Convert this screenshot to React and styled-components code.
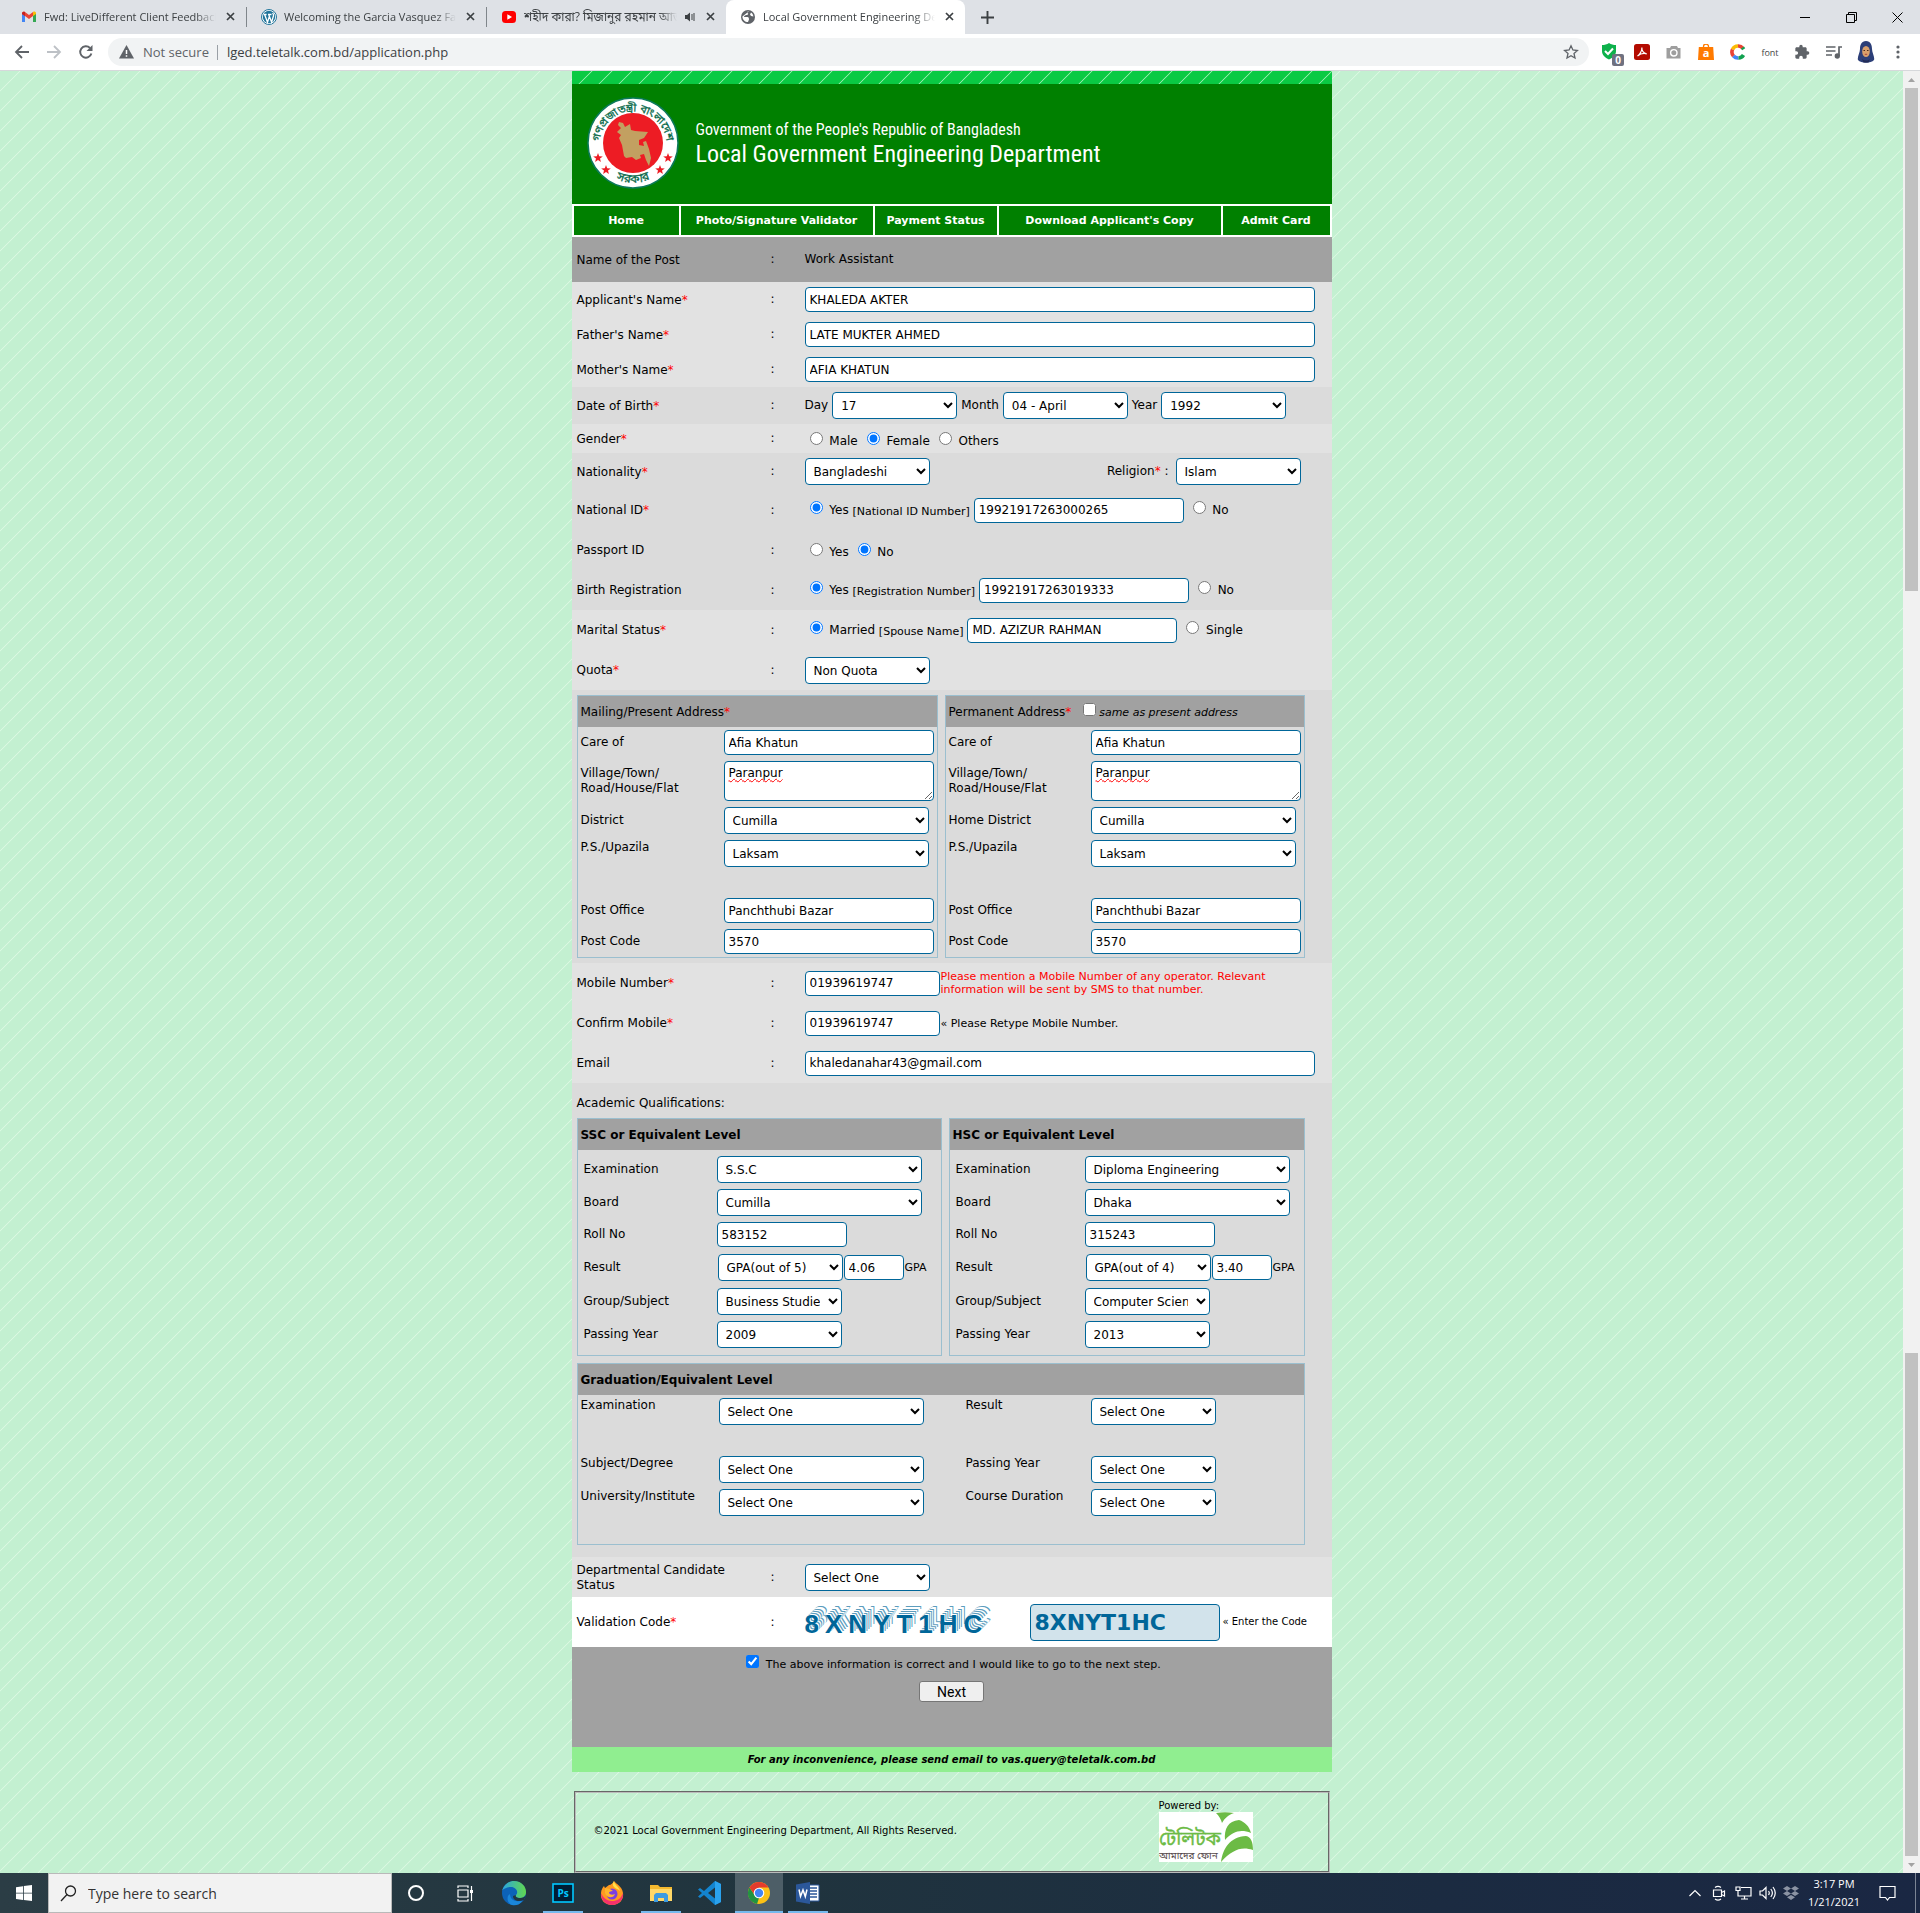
import React from 'react';
import styled, { createGlobalStyle, css } from 'styled-components';

const BLUE = '#006699';
const FORM_FONT = '"DejaVu Sans", Verdana, sans-serif';
const UI_FONT = '"Open Sans", "Noto Sans Bengali", sans-serif';

const GlobalStyle = createGlobalStyle`
  *, *::before, *::after { box-sizing: border-box; }
  body { margin: 0; font-family: ${FORM_FONT}; font-size: 12px; line-height: 15px; color: #000; }
  button, input, select, textarea { font-family: inherit; }
`;

const stripes = (color) => css`
  background-image: linear-gradient(135deg, transparent 47%, ${color} 50%, transparent 53%),
    linear-gradient(135deg, ${color} 0%, transparent 3%, transparent 97%, ${color} 100%);
  background-size: 20px 20px;
`;

/* ---------- browser frame ---------- */

const Screen = styled.div`
  display: flex;
  flex-direction: column;
  min-height: 100vh;
`;

const TabStrip = styled.div`
  display: flex;
  height: 34px;
  padding-left: 7px;
  background: #dee1e6;
  font-family: ${UI_FONT};
`;

const Tab = styled.div`
  display: flex;
  align-items: center;
  gap: 7px;
  width: 239px;
  padding: 7px 9px 8px 14px;
  font-size: 12px;
  color: #3c4043;
  border-radius: 8px 8px 0 0;
  background: ${(p) => (p.$active ? '#fff' : 'transparent')};
  svg { flex: none; }
`;

const TabTitle = styled.span`
  flex: 1;
  min-width: 0;
  overflow: hidden;
  white-space: nowrap;
  font-size: ${(p) => p.$size || 11}px;
  line-height: 19px;
  mask-image: linear-gradient(90deg, #000 88%, transparent);
`;

const TabRule = styled.span`
  align-self: center;
  width: 1px;
  height: 20px;
  background: #80868b;
`;

const PlainButton = styled.button`
  display: inline-flex;
  align-items: center;
  justify-content: center;
  width: ${(p) => p.$w || 32}px;
  height: 100%;
  padding: 0;
  border: 0;
  background: none;
  color: #5f6368;
`;

const Spacer = styled.span`
  flex: 1;
`;

const Toolbar = styled.div`
  display: flex;
  align-items: center;
  height: 37px;
  padding: 0 6px;
  background: #fff;
  border-bottom: 1px solid #d6d8db;
  font-family: ${UI_FONT};
`;

const AddressBar = styled.div`
  display: flex;
  align-items: center;
  flex: 1;
  height: 28px;
  margin: 0 5px 0 6px;
  padding: 0 2px 0 11px;
  border-radius: 14px;
  background: #f1f3f4;
  font-size: 13px;
  color: #5f6368;
`;

const Security = styled.span`
  margin-left: 9px;
  padding-right: 8px;
  border-right: 1px solid #9aa0a6;
`;

const Url = styled.input`
  flex: 1;
  margin-left: 9px;
  padding: 0;
  border: 0;
  background: none;
  font-size: 13px;
  color: #3c4043;
`;

const FontBadge = styled.span`
  font-size: 9px;
  color: #444;
`;

const Viewport = styled.div`
  display: flex;
  flex: 1;
`;

const Page = styled.main`
  flex: 1;
  background-color: #c3f0d1;
  ${stripes('#daf8e1')}
`;

const ScrollTrack = styled.div`
  display: grid;
  grid-template-rows: 17px 503fr 762fr 503fr 17px;
  justify-items: center;
  align-items: center;
  width: 17px;
  background: #f1f1f1;
`;

const Thumb = styled.div`
  width: 13px;
  height: 100%;
  background: #c1c1c1;
`;

/* ---------- site shell ---------- */

const Site = styled.div`
  max-width: 760px;
  margin: 0 auto;
`;

const TopStrip = styled.div`
  height: 13px;
  background-color: #0aca43;
  ${stripes('#8eeaa5')}
`;

const Banner = styled.header`
  display: flex;
  align-items: center;
  gap: 17px;
  height: 120px;
  padding-left: 15px;
  background: #008000;
  color: #fff;
`;

const BannerTitles = styled.div`
  font-family: "Roboto Condensed", "Liberation Sans Narrow", Roboto, sans-serif;
`;

const Country = styled.p`
  margin: 0;
  font-size: 16px;
  line-height: 20px;
`;

const Department = styled.h1`
  margin: 0;
  font-size: 24px;
  font-weight: 400;
  line-height: 28px;
`;

const Nav = styled.nav`
  display: grid;
  grid-template-columns: 105fr 192fr 122fr 222fr 107fr;
  gap: 2px;
  padding: 2px;
  background: #fff;
`;

const NavLink = styled.a`
  padding-top: 1px;
  background: #008000;
  color: #fff;
  font-size: 11px;
  font-weight: bold;
  line-height: 28px;
  text-align: center;
  text-decoration: none;
  white-space: nowrap;
`;

/* ---------- form ---------- */

const TONES = { light: '#e2e2e2', dark: '#dbdbdb', gray: '#a1a1a1', white: '#fff' };

const Row = styled.div`
  display: grid;
  grid-template-columns: 194px 34px 1fr;
  align-items: center;
  min-height: ${(p) => p.$h || 40}px;
  padding-left: 5px;
  background: ${(p) => TONES[p.$tone]};
`;

const RowLabel = styled.label`
  max-width: 160px;
  padding-top: 1px;
`;

const Star = styled.span`
  color: #f00;
  &::before { content: "*"; }
`;

const Inline = styled.div`
  display: flex;
  align-items: center;
  gap: ${(p) => (p.$gap === undefined ? 4 : p.$gap)}px;
`;

const SplitInline = styled(Inline)`
  justify-content: space-between;
  padding-right: 31px;
`;

const field = css`
  border: 1px solid ${BLUE};
  border-radius: 4px;
  background: #fff;
  color: #000;
  font-size: 12px;
`;

const TextInput = styled.input`
  ${field}
  width: ${(p) => p.$w || 210}px;
  max-width: 100%;
  height: 25px;
  padding: 0 4px;
`;

const SelectBox = styled.select`
  ${field}
  width: ${(p) => p.$w || 125}px;
  height: 27px;
  padding: 5px 5px 5px 4px;
`;

const Area = styled.textarea`
  ${field}
  display: block;
  width: 210px;
  height: 40px;
  padding: 4px;
  line-height: 15px;
  text-decoration: underline wavy #f00 1px;
  text-decoration-skip-ink: none;
`;

const Small = styled.span`
  font-size: 11px;
  line-height: 13px;
`;

const Warning = styled(Small)`
  max-width: 340px;
  color: #f00;
`;

const AddressSection = styled.section`
  display: grid;
  grid-template-columns: 361fr 360fr;
  gap: 7px;
  padding: 5px 27px 5px 5px;
  background: ${TONES.dark};
`;

const AcademicSection = styled.section`
  display: grid;
  grid-template-columns: 365fr 356fr;
  gap: 7px;
  padding: 13px 27px 12px 5px;
  background: ${TONES.dark};
`;

const SectionTitle = styled.h2`
  grid-column: 1 / -1;
  margin: 0;
  font-size: 12px;
  font-weight: 400;
  line-height: 15px;
`;

const Panel = styled.fieldset`
  min-width: 0;
  margin: 0;
  padding: 0;
  border: 1px solid #9bbfcf;
  grid-column: ${(p) => (p.$wide ? '1 / -1' : 'auto')};
`;

const PanelHead = styled.div`
  height: 31px;
  padding: 1px 0 0 3px;
  background: #a1a1a1;
  line-height: 30px;
  font-weight: ${(p) => (p.$bold ? 'bold' : 'normal')};
`;

const SameAs = styled.label`
  margin-left: 4px;
  font-size: 11px;
  font-style: italic;
`;

const PanelGrid = styled.div`
  display: grid;
  grid-template-columns: ${(p) => p.$cols};
  row-gap: 6px;
  align-items: ${(p) => p.$align || 'center'};
  padding: ${(p) => p.$pad};
`;

const TallLabel = styled.label`
  align-self: start;
  min-height: ${(p) => p.$h || 52}px;
`;

const TopCell = styled.div`
  align-self: start;
`;

const ResultCell = styled(Inline)`
  min-height: 29px;
  padding-left: 1px;
`;

const CaptchaCell = styled.div`
  display: flex;
  align-items: center;
`;

const CodeInput = styled.input`
  width: 190px;
  height: 37px;
  margin-right: 3px;
  padding: 0 4px;
  border: 1px solid ${BLUE};
  border-radius: 4px;
  background: #d2e3eb;
  color: ${BLUE};
  font-size: 22px;
  font-weight: bold;
`;

const Captcha = styled.div`
  display: flex;
  gap: 6px;
  width: 225px;
  padding-top: 4px;
  color: ${BLUE};
  font-family: "Liberation Sans", Arial, sans-serif;
  font-size: 26px;
  font-weight: bold;
  line-height: 28px;
  text-shadow: 1px -1px #fff, 2px -2px #5c9dbe, 3px -3px #fff, 4px -4px #5c9dbe, 5px -5px #fff,
    6px -6px #5c9dbe, 7px -7px #fff, 8px -8px #fff, 9px -9px #5c9dbe;
`;

const Tiny = styled.span`
  font-size: 10px;
  line-height: 12px;
`;

const SubmitArea = styled.div`
  height: 100px;
  padding-top: 5px;
  background: #a1a1a1;
  text-align: center;
`;

const Agree = styled.label`
  display: block;
  font-size: 11px;
  line-height: 20px;
`;

const NextButton = styled.button`
  width: 65px;
  height: 21px;
  margin-top: 6px;
  padding: 0;
  border: 1px solid #767676;
  border-radius: 3px;
  background: #efefef;
  color: #000;
  font-family: Roboto, sans-serif;
  font-size: 14px;
`;

const HelpLine = styled.p`
  margin: 0;
  background: #90ee90;
  font-size: 10px;
  font-weight: bold;
  font-style: italic;
  line-height: 25px;
  text-align: center;
`;

const Footer = styled.footer`
  display: flex;
  align-items: center;
  justify-content: space-between;
  min-height: 82px;
  margin: 19px 2px 0;
  padding: 4px 75px 7px 18px;
  border: 2px groove #bbb;
  font-size: 10px;
  line-height: 12px;
`;

const Powered = styled.div`
  svg { display: block; }
`;

/* ---------- taskbar ---------- */

const Taskbar = styled.div`
  display: flex;
  height: 40px;
  background: linear-gradient(90deg, #2b3d45, #20343e 40%, #1b2b41 75%, #1a2743);
  color: #fff;
  font-family: ${UI_FONT};
`;

const Search = styled.label`
  display: flex;
  align-items: center;
  gap: 11px;
  width: 344px;
  padding-left: 11px;
  border: 1px solid #b9b9b9;
  background: #f2f2f2;
  color: #222;
`;

const SearchInput = styled.input`
  flex: 1;
  border: 0;
  padding: 0;
  background: none;
  font-size: 14px;
  &::placeholder { color: #333; opacity: 1; }
`;

const AppButton = styled(PlainButton)`
  width: 48px;
  margin-right: 1px;
  color: #fff;
  background-color: ${(p) => (p.$active ? '#4d5e67' : 'transparent')};
  border-bottom: 3px solid transparent;
  border-top: 3px solid transparent;
  ${(p) => p.$open && css`
    background-image: linear-gradient(#76b9ed, #76b9ed);
    background-origin: border-box;
    background-repeat: no-repeat;
    background-size: ${p.$active ? '100%' : '40px'} 2px;
    background-position: center bottom;
  `}
`;

const Clock = styled.div`
  width: 62px;
  font-size: 11px;
  line-height: 18px;
  padding-top: 2px;
  text-align: center;
`;

const DesktopEdge = styled.span`
  width: 1px;
  margin: 0 4px 0 6px;
  background: #7b8494;
`;

/* ---------- drawings ---------- */

const CloseIcon = () => (
  <svg width="9" height="9" viewBox="0 0 9 9" stroke="#3c4043" strokeWidth="1.7"><path d="M1 1l7 7M8 1L1 8" /></svg>
);

const Gmail = () => (
  <svg width="16" height="16" viewBox="0 0 16 16">
    <path d="M1 13V4l3 2.500V13z" fill="#4285f4" /><path d="M12 13V6.500L15 4v9z" fill="#34a853" />
    <path d="M1 4.500C1 2.500 3 2.300 4 3l4 3 4-3v4L8 10 4 7 1 5z" fill="#ea4335" />
    <path d="M12 3c1-.8 3-.5 3 1.500V5l-3 2z" fill="#fbbc04" /><path d="M1 4.500c0-2 2-2.200 3-1.500v4L1 5z" fill="#c5221f" />
  </svg>
);

const WordPress = () => (
  <svg width="16" height="16" viewBox="0 0 16 16" fill="none">
    <circle cx="8" cy="8" r="7.500" fill="#fff" stroke="#21759b" />
    <circle cx="8" cy="8" r="6.200" fill="#21759b" />
    <path d="M2.600 5.500h3M7 5.500h3.500M3.700 5.700l2.800 7.500L8.500 7M7.800 5.700l2.800 7.500 1.900-6.500c.3-1-.4-1.800-.9-2.700" stroke="#fff" strokeWidth="1.300" />
  </svg>
);

const YouTube = () => (
  <svg width="16" height="16" viewBox="0 0 16 16"><rect x="1" y="2" width="14" height="12" rx="3.500" fill="#f00" /><path d="M6.300 5.200v5.600L11 8z" fill="#fff" /></svg>
);

const Globe = () => (
  <svg width="16" height="16" viewBox="0 0 16 16"><circle cx="8" cy="8" r="7" fill="#5f6368" /><path d="M9 2.200c-2 .3-2.500 1.500-1.300 2 1.300.6 0 1.800-1.300 1.800S4 7 4 8h3.500c1.300 0 1.500 1.500 1.500 2.500L8 13c-3 0-5.500-2-5.600-5.500M11 3.500c1.500 1 2.300 2.500 2.400 4L11 7l-1-1.500z" fill="#fff" /></svg>
);

const Speaker = () => (
  <svg width="12" height="12" viewBox="0 0 12 12" fill="#3c4043"><path d="M1 4h2l3-2.500v9L3 8H1z" /><path d="M8 3v6M10 2v8" stroke="#3c4043" strokeWidth="1" fill="none" /></svg>
);

const Arrow = ({ flip, color }) => (
  <svg width="16" height="16" viewBox="0 0 16 16" fill="none" stroke={color} strokeWidth="1.800" transform={flip ? 'scale(-1 1)' : undefined}>
    <path d="M15 8H2.500M8 2L2 8l6 6" />
  </svg>
);

const Reload = () => (
  <svg width="16" height="16" viewBox="0 0 16 16"><path d="M13.400 9.500A5.700 5.700 0 1 1 12 4" fill="none" stroke="#5f6368" strokeWidth="1.900" /><path d="M14.500 1v6h-6z" fill="#5f6368" /></svg>
);

const Triangle = () => (
  <svg width="15" height="14" viewBox="0 0 15 14"><path d="M7.500 0L15 13.500H0z" fill="#5f6368" /><path d="M7.500 5v4M7.500 10.200v1.600" stroke="#fff" strokeWidth="1.500" /></svg>
);

const StarIcon = () => (
  <svg width="16" height="16" viewBox="0 0 16 16" fill="none" stroke="#5f6368" strokeWidth="1.300"><path d="M8 1.800l1.900 4.200 4.500.5-3.400 3 1 4.500L8 11.700 4 14l1-4.500-3.400-3L6.100 6z" /></svg>
);

const Shield = () => (
  <svg width="28" height="28" viewBox="0 0 28 28">
    <path d="M13 5c2 1.500 4.500 2 7 2v6c0 4-3 6.500-7 8.500C9 19.500 6 17 6 13V7c2.500 0 5-.5 7-2z" fill="#0db14b" />
    <path d="M9 13l3 3 5-5.500" fill="none" stroke="#fff" strokeWidth="2" />
    <rect x="16" y="16" width="12" height="12" rx="2" fill="#6f7180" />
    <text x="22" y="26" fontSize="10" fontWeight="bold" textAnchor="middle" fill="#fff">0</text>
  </svg>
);

const Acrobat = () => (
  <svg width="16" height="16" viewBox="0 0 16 16"><rect width="16" height="16" rx="2.500" fill="#b30b00" /><path d="M3.500 12c2-1.300 4.700-5 4.400-8.500C7.500 6.500 9.500 9.500 12.700 9.800 9.500 9 6 10 3.500 12z" fill="none" stroke="#fff" strokeWidth="1.200" /></svg>
);

const Camera = () => (
  <svg width="16" height="16" viewBox="0 0 16 16"><path d="M5 2h6l1 2h2.500v10.500h-14V4H4z" fill="#9e9e9e" /><circle cx="7.800" cy="8.800" r="3.200" fill="#9e9e9e" stroke="#fff" strokeWidth="1.400" /></svg>
);

const Bag = () => (
  <svg width="16" height="16" viewBox="0 0 16 16"><path d="M5.500 4V2.500a2.500 2.500 0 0 1 5 0V4" fill="none" stroke="#ff7a00" strokeWidth="1.300" /><path d="M.8 3h14.400l.8 13H0z" fill="#ff7a00" /><text x="8" y="13" fontSize="11" fontWeight="bold" textAnchor="middle" fill="#fff">a</text></svg>
);

const Colorful = () => (
  <svg width="16" height="16" viewBox="0 0 16 16" fill="none" strokeWidth="3.600">
    <path d="M13 4.300A6 6 0 0 0 8 2" stroke="#ea4335" /><path d="M8 2a6 6 0 0 0-5.500 3.500" stroke="#fbbc04" />
    <path d="M2.500 5.500a6 6 0 0 0 1 6.500" stroke="#ea4335" /><path d="M3.500 12A6 6 0 0 0 8.500 14" stroke="#4285f4" />
    <path d="M8.500 14a6 6 0 0 0 5-3M12.500 3.500l1.200 1.800" stroke="#12a150" />
  </svg>
);

const Puzzle = () => (
  <svg width="16" height="16" viewBox="0 0 24 24" fill="#5f6368"><path d="M20.500 11H19V7c0-1.100-.9-2-2-2h-4V3.500a2.500 2.500 0 0 0-5 0V5H4c-1.100 0-2 .9-2 2v3.800h1.500a2.700 2.700 0 0 1 0 5.400H2V20c0 1.100.9 2 2 2h3.800v-1.500a2.700 2.700 0 0 1 5.400 0V22H17c1.100 0 2-.9 2-2v-4h1.500a2.500 2.500 0 0 0 0-5z" /></svg>
);

const Queue = () => (
  <svg width="16" height="16" viewBox="0 0 16 16" fill="none" stroke="#5f6368" strokeWidth="1.700"><path d="M0 3h9.500M0 7h9.500M0 11h6" /><path d="M13 12V3h3" /><circle cx="11.300" cy="12" r="1.800" fill="#5f6368" /></svg>
);

const Avatar = () => (
  <svg width="20" height="22" viewBox="0 0 20 22"><path d="M10 0C5.500 0 4 4 4 8c0 4-3 8-2 11 3 3.500 13 3.500 16 0 1-3-2-7-2-11 0-4-1.500-8-6-8z" fill="#2c3f78" /><ellipse cx="10" cy="10.500" rx="3.800" ry="5.500" fill="#d9a06b" /><path d="M6 18c2.500 2 5.500 2 8 0l-1.500 3.500h-5z" fill="#222b55" /><path d="M7.500 9.500H9M11 9.500h1.500" stroke="#4a2a1a" /><path d="M8.800 13.300h2.400" stroke="#a8433a" /></svg>
);

const Dots = () => (
  <svg width="4" height="16" viewBox="0 0 4 16" fill="#5f6368"><circle cx="2" cy="3" r="1.600" /><circle cx="2" cy="8" r="1.600" /><circle cx="2" cy="13" r="1.600" /></svg>
);

const star = (cx, cy, r = 5) => {
  const pts = [];
  for (let i = 0; i < 10; i += 1) {
    const a = (Math.PI / 5) * i - Math.PI / 2;
    const d = i % 2 ? r * 0.42 : r;
    pts.push(`${(cx + d * Math.cos(a)).toFixed(1)},${(cy + d * Math.sin(a)).toFixed(1)}`);
  }
  return <polygon key={`${cx}-${cy}`} points={pts.join(' ')} fill="#ed1c24" />;
};

const Seal = () => (
  <svg width="92" height="94" viewBox="-1 0 92 94" role="img" aria-label="Government seal">
    <defs>
      <path id="sealTop" d="M11.500 48a33.500 33.500 0 1 1 67 0" />
      <path id="sealBottom" d="M14 71a40 40 0 0 0 62 0" />
    </defs>
    <circle cx="45" cy="46" r="45" fill="#fff" stroke="#0b7a5a" strokeWidth="1.500" />
    <circle cx="45" cy="46" r="30" fill="#ed1c24" />
    <path d="M31 25l4 1 2 4 5-3 1 6 4 1 13 1-4 6-5 2v5l5 1-1-4 3-1 3 8 2 9-2 8-3-6-2-6-4 1 1 3-5 2-4-3-6 1-2-2-2-11-3-7 2-3-4-3 4-4-3-3z" fill="#c2a061" />
    <g fontFamily='"Noto Sans Bengali", "FreeSans", sans-serif' fontSize="11" fill="#0b6b4c" stroke="#0b6b4c" strokeWidth="0.3" textAnchor="middle">
      <text><textPath href="#sealTop" startOffset="50%">গণপ্রজাতন্ত্রী বাংলাদেশ</textPath></text>
      <text fontSize="12"><textPath href="#sealBottom" startOffset="50%">সরকার</textPath></text>
    </g>
    {star(10, 61)}{star(18, 73)}{star(72, 73)}{star(80, 61)}
  </svg>
);

const Teletalk = () => (
  <svg width="94" height="50" viewBox="0 0 94 50" role="img" aria-label="Teletalk">
    <rect width="94" height="50" fill="#fff" />
    <g fontFamily='"Noto Sans Bengali", "FreeSans", sans-serif'>
      <text x="0" y="33" fontSize="19" fill="#6cbb45" stroke="#6cbb45" strokeWidth="0.4">টেলিটক</text>
      <text x="0" y="47" fontSize="10" fill="#54474a">আমাদের ফোন</text>
    </g>
    <path d="M57 1c6-1 12-1 18 0-6 2-9 5-12 10-1-4-3-7-6-10zM66 28c-1-11 3-19 14-20 6 2 10 6 12 13-10-4-18-2-26 7zM62 50c2-14 9-25 25-26 5 1 7 6 7 14-12-4-21 0-32 12z" fill="#6cbb45" />
  </svg>
);

const Windows = () => (
  <svg width="16" height="16" viewBox="0 0 16 16" fill="#fff"><path d="M0 2.200l7-1v6.500H0zM7.800 1.100L16 0v7.700H7.800zM0 8.400h7v6.500l-7-1zM7.800 8.400H16V16l-8.200-1.100z" /></svg>
);

const Cortana = () => <svg width="18" height="18" viewBox="0 0 18 18"><circle cx="9" cy="9" r="7" fill="none" stroke="#fff" strokeWidth="2" /></svg>;

const TaskView = () => (
  <svg width="17" height="17" viewBox="0 0 17 17" fill="none" stroke="#fff" strokeWidth="1.200"><path d="M1 3V1h10v2M1 14v2h10v-2M1 5h10v7H1zM14.500 1v15" /><path d="M13 5h3v3h-3z" fill="#fff" stroke="none" /></svg>
);

const Edge = () => (
  <svg width="26" height="26" viewBox="0 0 26 26"><defs><linearGradient id="edgeTop" x1="0" x2="1"><stop offset="0" stopColor="#2aa4e0" /><stop offset="1" stopColor="#62d84e" /></linearGradient></defs>
    <circle cx="13" cy="13" r="12" fill="#0c62b8" /><path d="M1 11C3 4 8 1 13 1c8 0 12 6 12 11 0 4-3 6-6 6-4 0-5-2-4-3 3-3 0-8-5-8-4 0-8 2-9 4z" fill="url(#edgeTop)" /><path d="M9 14c0 6 6 9 13 6-3 5-8 6-11 5-5-2-6-9-2-11z" fill="#1a86d9" /><path d="M15 15c-1 1 0 3 4 3 3 0 5-1 6-3l-2 5c-5 2-11 1-11-4z" fill="#21353f" /></svg>
);

const Photoshop = () => (
  <svg width="22" height="20" viewBox="0 0 22 20"><rect x="1" y="1" width="20" height="18" fill="#001d34" stroke="#00c8ff" strokeWidth="1.600" /><text x="11" y="14" fontSize="10" fontFamily="Open Sans" fontWeight="bold" textAnchor="middle" fill="#00c8ff">Ps</text></svg>
);

const Firefox = () => (
  <svg width="24" height="24" viewBox="0 0 24 24"><path d="M14 0c2 3 8 5 9 12s-4 12-11 12S0 19 1 12c0-3 2-6 3-7l1 2 4-3c2 0 4-2 5-4z" fill="#ff9a1f" /><path d="M1 12c0 8 5 12 11 12 7 0 12-6 11-12-2 6-6 8-11 8C6 20 3 16 1 12z" fill="#f5316c" /><circle cx="12" cy="13" r="5.500" fill="#7b3fe0" /><path d="M5 7c2 0 3 1 5 1l3 2c-3 0-4 1-4 2 1 2 4 2 6 1-1 4-8 5-10-1z" fill="#ffb52b" /><path d="M14 0c0 4 5 5 6 10-2-2-4-2-6-4-2-2-1-4 0-6z" fill="#ffe14a" /></svg>
);

const Explorer = () => (
  <svg width="22" height="20" viewBox="0 0 22 20"><path d="M0 2h8l2 2h12v14H0z" fill="#f4b92f" /><path d="M0 6h22v12H0z" fill="#ffd868" /><path d="M4 19v-7l2-2h10l2 2v7h-4v-4H8v4z" fill="#3d9be0" /></svg>
);

const VsCode = () => (
  <svg width="24" height="24" viewBox="0 0 24 24"><path d="M17 0l6 3v18l-6 3L6 14l-4 3-2-1.500L4 12 0 8.500 2 7l4 3z" fill="#1384cf" /><path d="M17 6.500L10 12l7 5.500z" fill="#21353f" /><path d="M17 0l6 3v18l-6 3z" fill="#2aa2ee" /></svg>
);

const Chrome = () => (
  <svg width="24" height="24" viewBox="0 0 24 24"><circle cx="12" cy="12" r="11" fill="#fbc116" /><path d="M2.500 6.500L8 14.500l4 2.500-2 6A11 11 0 0 1 2.500 6.500z" fill="#229342" /><path d="M2.500 6.500A11 11 0 0 1 21.500 6.500H12L7 13z" fill="#e33b2e" /><circle cx="12" cy="12" r="5.300" fill="#fff" /><circle cx="12" cy="12" r="4.200" fill="#4285f4" /></svg>
);

const Word = () => (
  <svg width="24" height="22" viewBox="0 0 24 22"><path d="M11 3h12v16H11z" fill="#fff" stroke="#2b579a" /><path d="M14 6h7M14 9h7M14 12h7M14 15h7" stroke="#2b579a" strokeWidth="1.400" /><path d="M0 2.500L14 0v22L0 19.500z" fill="#2b579a" /><path d="M3 7.500l1.500 7L7 8l2.300 6.500L11 7.500" fill="none" stroke="#fff" strokeWidth="1.500" /></svg>
);

const Line = ({ w = 18, h = 16, d }) => (
  <svg width={w} height={h} viewBox={`0 0 ${w} ${h}`} fill="none" stroke="#fff" strokeWidth="1.200"><path d={d} /></svg>
);

const Dropbox = () => (
  <svg width="16" height="14" viewBox="0 0 16 14" fill="#8b93a3"><path d="M4 0l4 2.500L4 5 0 2.500zM12 0l4 2.500L12 5 8 2.500zM4 5l4 2.500L4 10 0 7.500zM12 5l4 2.500-4 2.500-4-2.500zM8 9l4 2.300L8 14l-4-2.700z" /></svg>
);

/* ---------- form pieces ---------- */

const Choice = ({ id, value, w }) => (
  <SelectBox id={id} aria-label={id} $w={w} defaultValue={value}><option>{value}</option></SelectBox>
);

const Radio = ({ name, label, checked }) => (
  <label><input type="radio" name={name} defaultChecked={checked} /> {label}</label>
);

const FormRow = ({ tone, h, label, id, required, children }) => (
  <Row $tone={tone} $h={h}>
    <RowLabel htmlFor={id}>{label}{required && <Star />}</RowLabel>
    <span>:</span>
    <div>{children}</div>
  </Row>
);

const IdRow = ({ tone, label, required, name, yes, hint, value, no }) => (
  <FormRow tone={tone} label={label} id={name} required={required}>
    <Radio name={`${name}-choice`} label={yes} checked />{' '}
    <Small>[{hint}]</Small>{' '}
    <TextInput id={name} defaultValue={value} />{' '}
    <Radio name={`${name}-choice`} label={no} />
  </FormRow>
);

const AddressPanel = ({ prefix, head, district, cols }) => (
  <Panel>
    <PanelHead>{head}</PanelHead>
    <PanelGrid $cols={cols} $pad="3px 0 3px 3px">
      <label htmlFor={`${prefix}-care`}>Care of</label>
      <TextInput id={`${prefix}-care`} defaultValue="Afia Khatun" />
      <label htmlFor={`${prefix}-village`}>Village/Town/<br />Road/House/Flat</label>
      <Area id={`${prefix}-village`} defaultValue="Paranpur" spellCheck={false} />
      <label htmlFor={`${prefix}-district`}>{district}</label>
      <Choice id={`${prefix}-district`} value="Cumilla" w={205} />
      <TallLabel htmlFor={`${prefix}-upazila`}>P.S./Upazila</TallLabel>
      <TopCell><Choice id={`${prefix}-upazila`} value="Laksam" w={205} /></TopCell>
      <label htmlFor={`${prefix}-office`}>Post Office</label>
      <TextInput id={`${prefix}-office`} defaultValue="Panchthubi Bazar" />
      <label htmlFor={`${prefix}-code`}>Post Code</label>
      <TextInput id={`${prefix}-code`} defaultValue="3570" />
    </PanelGrid>
  </Panel>
);

const ExamPanel = ({ prefix, title, cols, exam, board, roll, scale, gpa, group, year }) => (
  <Panel>
    <PanelHead $bold>{title}</PanelHead>
    <PanelGrid $cols={cols} $pad="6px 0 7px 6px">
      <label htmlFor={`${prefix}-exam`}>Examination</label>
      <Choice id={`${prefix}-exam`} value={exam} w={205} />
      <label htmlFor={`${prefix}-board`}>Board</label>
      <Choice id={`${prefix}-board`} value={board} w={205} />
      <label htmlFor={`${prefix}-roll`}>Roll No</label>
      <TextInput id={`${prefix}-roll`} $w={130} defaultValue={roll} />
      <label htmlFor={`${prefix}-result`}>Result</label>
      <ResultCell $gap={1}>
        <Choice id={`${prefix}-result`} value={scale} />
        <TextInput aria-label={`${title} GPA`} $w={60} defaultValue={gpa} />
        <Small>GPA</Small>
      </ResultCell>
      <label htmlFor={`${prefix}-group`}>Group/Subject</label>
      <Choice id={`${prefix}-group`} value={group} />
      <label htmlFor={`${prefix}-year`}>Passing Year</label>
      <Choice id={`${prefix}-year`} value={year} />
    </PanelGrid>
  </Panel>
);

const TABS = [
  { icon: <Gmail />, title: 'Fwd: LiveDifferent Client Feedback' },
  { icon: <WordPress />, title: 'Welcoming the Garcia Vasquez Family' },
  { icon: <YouTube />, title: 'শহীদ কারা? মিজানুর রহমান আজহারী', sound: true, size: 12 },
  { icon: <Globe />, title: 'Local Government Engineering Department', active: true },
];

const EXTENSIONS = [
  ['Security', <Shield />], ['Acrobat', <Acrobat />], ['Capture', <Camera />], ['Shopping', <Bag />],
  ['Colors', <Colorful />], ['Font', <FontBadge>font</FontBadge>], ['Extensions', <Puzzle />],
  ['Media', <Queue />], ['Profile', <Avatar />], ['Menu', <Dots />],
];

const APPS = [
  ['Cortana', <Cortana />], ['Task view', <TaskView />], ['Edge', <Edge />], ['Photoshop', <Photoshop />, true],
  ['Firefox', <Firefox />], ['Explorer', <Explorer />, true], ['Code', <VsCode />], ['Chrome', <Chrome />, true, true],
  ['Word', <Word />, true],
];

export default function App() {
  return (
    <Screen>
      <GlobalStyle />
      <TabStrip>
        {TABS.map((t, i) => (
          <React.Fragment key={t.title}>
            <Tab $active={t.active}>
              {t.icon}
              <TabTitle $size={t.size}>{t.title}</TabTitle>
              {t.sound && <Speaker />}
              <PlainButton $w={14} aria-label="Close tab"><CloseIcon /></PlainButton>
            </Tab>
            {i < 2 && <TabRule />}
          </React.Fragment>
        ))}
        <PlainButton $w={44} aria-label="New tab"><svg width="13" height="13" viewBox="0 0 13 13" stroke="#3c4043" strokeWidth="1.900"><path d="M6.500 0v13M0 6.500h13" /></svg></PlainButton>
        <Spacer />
        <PlainButton $w={46} aria-label="Minimize"><svg width="10" height="10" stroke="#000"><path d="M0 5.500h10" /></svg></PlainButton>
        <PlainButton $w={46} aria-label="Restore"><svg width="11" height="11" stroke="#000" fill="none"><path d="M.5 2.500h8v8h-8zM2.500 2.500v-2h8v8h-2" /></svg></PlainButton>
        <PlainButton $w={46} aria-label="Close"><svg width="11" height="11" stroke="#000"><path d="M.5.5l10 10M10.500.5l-10 10" /></svg></PlainButton>
      </TabStrip>
      <Toolbar>
        <PlainButton aria-label="Back"><Arrow color="#5f6368" /></PlainButton>
        <PlainButton aria-label="Forward"><Arrow flip color="#bdc1c6" /></PlainButton>
        <PlainButton aria-label="Reload"><Reload /></PlainButton>
        <AddressBar>
          <Triangle />
          <Security>Not secure</Security>
          <Url aria-label="Address" defaultValue="lged.teletalk.com.bd/application.php" />
          <PlainButton aria-label="Bookmark"><StarIcon /></PlainButton>
        </AddressBar>
        {EXTENSIONS.map(([name, icon]) => <PlainButton key={name} aria-label={name}>{icon}</PlainButton>)}
      </Toolbar>

      <Viewport>
        <Page>
          <Site>
            <TopStrip />
            <Banner>
              <Seal />
              <BannerTitles>
                <Country>Government of the People's Republic of Bangladesh</Country>
                <Department>Local Government Engineering Department</Department>
              </BannerTitles>
            </Banner>
            <Nav>
              {['Home', 'Photo/Signature Validator', 'Payment Status', "Download Applicant's Copy", 'Admit Card'].map((t) => (
                <NavLink key={t} href="#">{t}</NavLink>
              ))}
            </Nav>

            <form onSubmit={(e) => e.preventDefault()}>
              <FormRow tone="gray" h={45} label="Name of the Post">Work Assistant</FormRow>
              <FormRow tone="light" h={35} label="Applicant's Name" id="name" required><TextInput id="name" $w={510} defaultValue="KHALEDA AKTER" /></FormRow>
              <FormRow tone="light" h={35} label="Father's Name" id="father" required><TextInput id="father" $w={510} defaultValue="LATE MUKTER AHMED" /></FormRow>
              <FormRow tone="light" h={35} label="Mother's Name" id="mother" required><TextInput id="mother" $w={510} defaultValue="AFIA KHATUN" /></FormRow>
              <FormRow tone="dark" h={37} label="Date of Birth" id="day" required>
                <Inline>
                  <label htmlFor="day">Day</label><Choice id="day" value="17" />
                  <label htmlFor="month">Month</label><Choice id="month" value="04 - April" />
                  <label htmlFor="year">Year</label><Choice id="year" value="1992" />
                </Inline>
              </FormRow>
              <FormRow tone="light" h={29} label="Gender" required>
                <Radio name="gender" label="Male" />{' '}
                <Radio name="gender" label="Female" checked />{' '}
                <Radio name="gender" label="Others" />
              </FormRow>
              <FormRow tone="dark" h={37} label="Nationality" id="nationality" required>
                <SplitInline>
                  <Choice id="nationality" value="Bangladeshi" />
                  <Inline $gap={7}><label htmlFor="religion">Religion<Star /> :</label><Choice id="religion" value="Islam" /></Inline>
                </SplitInline>
              </FormRow>
              <IdRow tone="dark" label="National ID" required name="nid" yes="Yes" hint="National ID Number" value="19921917263000265" no="No" />
              <FormRow tone="dark" label="Passport ID">
                <Radio name="passport" label="Yes" />{' '}
                <Radio name="passport" label="No" checked />
              </FormRow>
              <IdRow tone="dark" label="Birth Registration" name="birth" yes="Yes" hint="Registration Number" value="19921917263019333" no="No" />
              <IdRow tone="light" label="Marital Status" required name="spouse" yes="Married" hint="Spouse Name" value="MD. AZIZUR RAHMAN" no="Single" />
              <FormRow tone="light" label="Quota" id="quota" required><Inline><Choice id="quota" value="Non Quota" /></Inline></FormRow>

              <AddressSection>
                <AddressPanel prefix="present" cols="143px 1fr" district="District" head={<>Mailing/Present Address<Star /></>} />
                <AddressPanel
                  prefix="permanent"
                  cols="142px 1fr"
                  district="Home District"
                  head={<>Permanent Address<Star /> <SameAs><input type="checkbox" />same as present address</SameAs></>}
                />
              </AddressSection>

              <FormRow tone="light" label="Mobile Number" id="mobile" required>
                <Inline $gap={1}>
                  <TextInput id="mobile" $w={135} defaultValue="01939619747" />
                  <Warning>Please mention a Mobile Number of any operator. Relevant information will be sent by SMS to that number.</Warning>
                </Inline>
              </FormRow>
              <FormRow tone="light" label="Confirm Mobile" id="mobile2" required>
                <Inline $gap={1}><TextInput id="mobile2" $w={135} defaultValue="01939619747" /><Small>« Please Retype Mobile Number.</Small></Inline>
              </FormRow>
              <FormRow tone="light" label="Email" id="email"><TextInput id="email" $w={510} defaultValue="khaledanahar43@gmail.com" /></FormRow>

              <AcademicSection>
                <SectionTitle>Academic Qualifications:</SectionTitle>
                <ExamPanel prefix="ssc" title="SSC or Equivalent Level" cols="133px 1fr" exam="S.S.C" board="Cumilla" roll="583152" scale="GPA(out of 5)" gpa="4.06" group="Business Studies" year="2009" />
                <ExamPanel prefix="hsc" title="HSC or Equivalent Level" cols="129px 1fr" exam="Diploma Engineering" board="Dhaka" roll="315243" scale="GPA(out of 4)" gpa="3.40" group="Computer Science" year="2013" />
                <Panel $wide>
                  <PanelHead $bold>Graduation/Equivalent Level</PanelHead>
                  <PanelGrid $cols="138px 247px 125px 1fr" $align="start" $pad="3px 0 28px 3px">
                    <TallLabel htmlFor="grad-exam">Examination</TallLabel><Choice id="grad-exam" value="Select One" w={205} />
                    <label htmlFor="grad-result">Result</label><Choice id="grad-result" value="Select One" />
                    <label htmlFor="grad-subject">Subject/Degree</label><Choice id="grad-subject" value="Select One" w={205} />
                    <label htmlFor="grad-year">Passing Year</label><Choice id="grad-year" value="Select One" />
                    <label htmlFor="grad-uni">University/Institute</label><Choice id="grad-uni" value="Select One" w={205} />
                    <label htmlFor="grad-length">Course Duration</label><Choice id="grad-length" value="Select One" />
                  </PanelGrid>
                </Panel>
              </AcademicSection>

              <FormRow tone="light" label="Departmental Candidate Status" id="dept"><Inline><Choice id="dept" value="Select One" /></Inline></FormRow>
              <FormRow tone="white" h={50} label="Validation Code" id="code" required>
                <CaptchaCell>
                  <Captcha>{[...'8XNYT1HC'].map((c) => <span key={c}>{c}</span>)}</Captcha>
                  <CodeInput id="code" defaultValue="8XNYT1HC" />
                  <Tiny>« Enter the Code</Tiny>
                </CaptchaCell>
              </FormRow>

              <SubmitArea>
                <Agree><input type="checkbox" defaultChecked /> The above information is correct and I would like to go to the next step.</Agree>
                <NextButton type="submit">Next</NextButton>
              </SubmitArea>
            </form>
            <HelpLine>For any inconvenience, please send email to vas.query@teletalk.com.bd</HelpLine>
            <Footer>
              <span>©2021 Local Government Engineering Department, All Rights Reserved.</span>
              <Powered>Powered by:<Teletalk /></Powered>
            </Footer>
          </Site>
        </Page>
        <ScrollTrack>
          <svg width="7" height="4" fill="#a3a3a3"><path d="M0 4l3.500-4L7 4z" /></svg>
          <Thumb />
          <span />
          <Thumb />
          <svg width="7" height="4" fill="#a3a3a3"><path d="M0 0l3.500 4L7 0z" /></svg>
        </ScrollTrack>
      </Viewport>

      <Taskbar>
        <PlainButton $w={48} aria-label="Start"><Windows /></PlainButton>
        <Search>
          <svg width="17" height="17" viewBox="0 0 17 17" fill="none" stroke="#222" strokeWidth="1.300"><circle cx="10.500" cy="6" r="5" /><path d="M7 9.500L1 16" /></svg>
          <SearchInput aria-label="Search" placeholder="Type here to search" />
        </Search>
        {APPS.map(([name, icon, open, active]) => (
          <AppButton key={name} aria-label={name} $open={open} $active={active}>{icon}</AppButton>
        ))}
        <Spacer />
        <PlainButton $w={24} aria-label="Show hidden icons"><Line w={12} h={8} d="M.5 7L6 1.500 11.500 7" /></PlainButton>
        <PlainButton $w={24} aria-label="Meet now"><Line w={14} h={16} d="M1.500 5h8v6.500h-8zM9.500 7.500l3-1.500v5l-3-1.500M3 2.500C5 1 7 1 9 2.500M3 14c2 1.500 4 1.500 6 0" /></PlainButton>
        <PlainButton $w={24} aria-label="Network"><Line w={17} h={14} d="M6 1.500h10v8.500H3V6M9.500 10v3M6 13h7M1 1h4v3.500H1zM3 4.500V7" /></PlainButton>
        <PlainButton $w={24} aria-label="Volume"><Line w={17} h={14} d="M1 5h2.500L7 1.500v11L3.500 9H1zM9.500 5c1 1.300 1 2.700 0 4M11.800 3c2 2.500 2 5.500 0 8M14 1c3 4 3 8 0 12" /></PlainButton>
        <PlainButton $w={24} aria-label="Dropbox"><Dropbox /></PlainButton>
        <Clock>3:17 PM<br />1/21/2021</Clock>
        <PlainButton $w={44} aria-label="Notifications"><Line w={17} h={17} d="M1 1.500h15v11h-5.500L8.500 15l-2-2.500H1z" /></PlainButton>
        <DesktopEdge />
      </Taskbar>
    </Screen>
  );
}
